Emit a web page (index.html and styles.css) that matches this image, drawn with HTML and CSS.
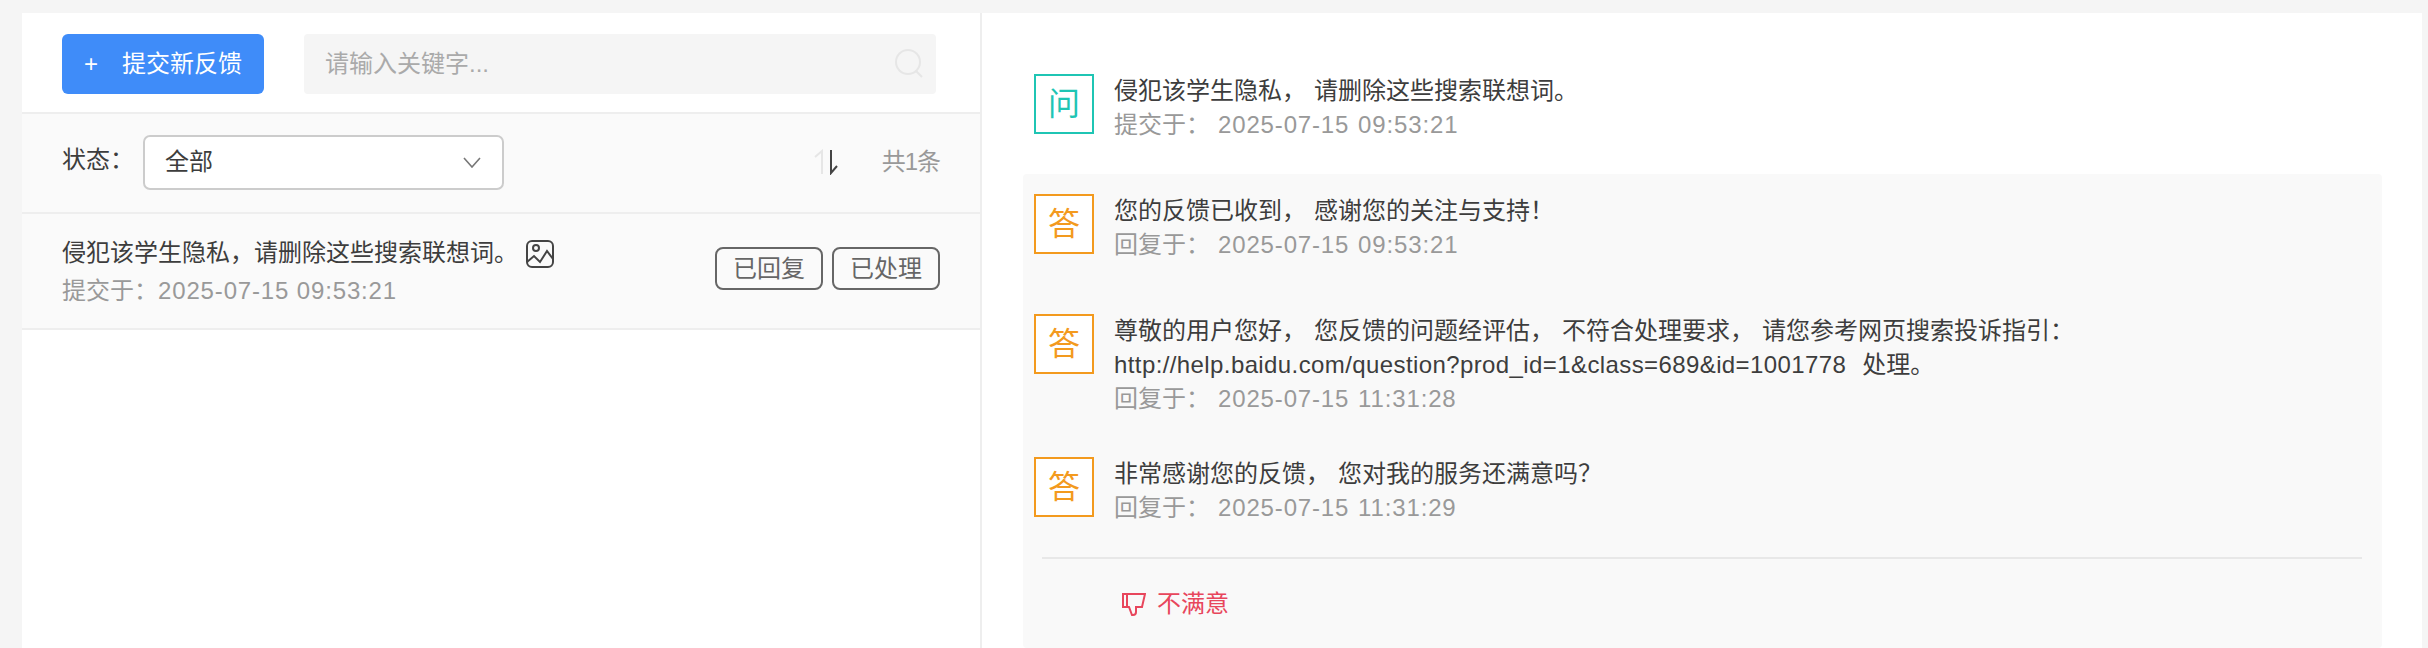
FILE: index.html
```html
<!DOCTYPE html>
<html lang="zh-CN">
<head>
    <meta charset="UTF-8">
    <title>反馈中心</title>
    <link rel="stylesheet" href="styles.css">
</head>
<body>
    <div class="panel">
        <div class="list-pane">
            <div class="toolbar">
                <button class="btn-new"><span class="plus">+</span>提交新反馈</button>
                <div class="search">
                    <span class="search-text">请输入关键字...</span>
                    <svg class="search-icon" viewBox="0 0 30 30" fill="none" stroke="#e6e6e6" stroke-width="2">
                        <circle cx="14" cy="13" r="12"/>
                        <path d="M22 22l6 6"/>
                    </svg>
                </div>
            </div>
            <div class="filter">
                <span class="filter-label">状态：</span>
                <div class="select">
                    <span>全部</span>
                    <svg class="chevron" viewBox="0 0 18 11" fill="none" stroke="#777" stroke-width="1.6">
                        <path d="M1 1l8 9 8-9"/>
                    </svg>
                </div>
                <svg class="sort-icon" viewBox="0 0 26 26" fill="none" stroke-width="2">
                    <path stroke="#e6e6e6" d="M9 25V2L2 8"/>
                    <path stroke="#444" d="M18 1v23l6-7"/>
                </svg>
                <span class="total">共1条</span>
            </div>
            <div class="item">
                <div class="item-main">
                    <div class="item-title">
                        侵犯该学生隐私，请删除这些搜索联想词。
                        <svg class="pic-icon" viewBox="0 0 28 28" fill="none" stroke="#444" stroke-width="2">
                            <rect x="1" y="1" width="26" height="26" rx="5"/>
                            <circle cx="10" cy="8" r="3"/>
                            <path d="M1 22l7-6 6 6 7-11 6 8"/>
                        </svg>
                    </div>
                    <div class="item-date">提交于：<span class="stamp">2025-07-15 09:53:21</span></div>
                </div>
                <span class="tag">已回复</span>
                <span class="tag">已处理</span>
            </div>
        </div>
        <div class="detail-pane">
            <div class="msg question">
                <div class="badge badge-q">问</div>
                <div class="msg-body">
                    <div>侵犯该学生隐私， 请删除这些搜索联想词。</div>
                    <div class="msg-date">提交于： <span class="stamp">2025-07-15 09:53:21</span></div>
                </div>
            </div>
            <div class="replies">
                <div class="msg">
                    <div class="badge badge-a">答</div>
                    <div class="msg-body">
                        <div>您的反馈已收到， 感谢您的关注与支持！</div>
                        <div class="msg-date">回复于： <span class="stamp">2025-07-15 09:53:21</span></div>
                    </div>
                </div>
                <div class="msg">
                    <div class="badge badge-a">答</div>
                    <div class="msg-body">
                        <div>尊敬的用户您好， 您反馈的问题经评估， 不符合处理要求， 请您参考网页搜索投诉指引：<br><span class="link-text">http://help.baidu.com/question?prod_id=1&amp;class=689&amp;id=1001778</span>&nbsp;&nbsp;处理。</div>
                        <div class="msg-date">回复于： <span class="stamp">2025-07-15 11:31:28</span></div>
                    </div>
                </div>
                <div class="msg">
                    <div class="badge badge-a">答</div>
                    <div class="msg-body">
                        <div>非常感谢您的反馈， 您对我的服务还满意吗？</div>
                        <div class="msg-date">回复于： <span class="stamp">2025-07-15 11:31:29</span></div>
                    </div>
                </div>
                <div class="rating">
                    <svg class="thumb-icon" viewBox="0 0 24 23" fill="none" stroke="#e8465c" stroke-width="2">
                        <path d="M5 1h18l-3 13h-6v5c0 2-1 3-3 3h-1l-3-8H5z"/>
                        <path d="M1 1h4v13H1z"/>
                    </svg>
                    不满意
                </div>
            </div>
        </div>
    </div>
</body>
</html>
```

FILE: styles.css
```css
* {
    box-sizing: border-box;
}
html, body {
    height: 100%;
}
body {
    margin: 0;
    padding: 13px 6px 0 22px;
    overflow: hidden;
    background: #f5f5f5;
    color: #3d3d3d;
    font-family: "Liberation Sans", "Noto Sans CJK SC", sans-serif;
    font-size: 24px;
    line-height: 34px;
}
.panel {
    display: flex;
    height: 100%;
    background: #fff;
}
.stamp {
    letter-spacing: 0.85px;
}

/* left list */
.list-pane {
    width: 960px;
    flex: none;
    border-right: 2px solid #eee;
}
.toolbar {
    display: flex;
    gap: 40px;
    height: 101px;
    padding: 21px 44px 0 40px;
    border-bottom: 2px solid #eee;
}
.btn-new {
    display: flex;
    align-items: center;
    width: 202px;
    height: 60px;
    padding: 0 0 0 22px;
    border: none;
    border-radius: 6px;
    background: #3f8cf9;
    color: #fff;
    font: inherit;
}
.plus {
    width: 38px;
    text-align: left;
}
.search {
    flex: 1;
    display: flex;
    align-items: center;
    justify-content: space-between;
    height: 60px;
    padding: 0 12px 0 21px;
    border-radius: 4px;
    background: #f5f5f5;
    color: #aaa;
}
.search-icon {
    width: 30px;
    height: 30px;
}
.filter {
    display: flex;
    align-items: center;
    height: 100px;
    padding: 0 40px 2px;
    background: #fafafa;
    border-bottom: 2px solid #eee;
}
.filter-label {
    width: 81px;
    padding-bottom: 4px;
}
.select {
    display: flex;
    align-items: center;
    justify-content: space-between;
    width: 361px;
    height: 55px;
    padding: 0 21px 0 20px;
    border: 2px solid #ccc;
    border-radius: 7px;
    background: #fff;
}
.chevron {
    width: 18px;
    height: 11px;
}
.sort-icon {
    width: 26px;
    height: 26px;
    margin-left: auto;
}
.total {
    margin-left: 43px;
    color: #999;
    letter-spacing: -1px;
}
.item {
    display: flex;
    align-items: center;
    gap: 9px;
    height: 116px;
    padding: 0 40px;
    background: #fafafa;
    border-bottom: 2px solid #eee;
}
.item-main {
    flex: 1;
    padding-top: 2px;
}
.item-title {
    display: flex;
    align-items: center;
    gap: 8px;
}
.pic-icon {
    width: 28px;
    height: 28px;
    margin-top: 2px;
}
.item-date {
    margin-top: 4px;
    color: #999;
}
.tag {
    width: 108px;
    height: 43px;
    margin-bottom: 6px;
    border: 2px solid #666;
    border-radius: 8px;
    color: #666;
    line-height: 39px;
    text-align: center;
}

/* right detail */
.detail-pane {
    flex: 1;
    display: flex;
    flex-direction: column;
    padding: 61px 40px 0 41px;
    word-spacing: 1.33px;
}
.msg {
    display: flex;
    gap: 20px;
    min-height: 80px;
    margin-bottom: 40px;
}
.question {
    margin: 0 0 20px 11px;
}
.replies {
    flex: 1;
    min-height: 0;
    padding: 20px 20px 0 11px;
    border-radius: 4px;
    background: #f9f9f9;
}
.link-text {
    letter-spacing: 0.4px;
}
.replies .msg:nth-child(2) {
    margin-bottom: 41px;
}
.replies .msg:nth-child(3) {
    margin-bottom: 20px;
}
.badge {
    width: 60px;
    height: 60px;
    flex: none;
    border: 2px solid;
    background: #fff;
    font-size: 32px;
    line-height: 56px;
    text-align: center;
}
.badge-q {
    border-color: #1fc5b4;
    color: #1fc5b4;
}
.badge-a {
    border-color: #f39a1e;
    color: #f39a1e;
}
.msg-date {
    color: #999;
}
.rating {
    display: flex;
    align-items: center;
    gap: 11px;
    height: 92px;
    margin-left: 8px;
    padding-left: 80px;
    border-top: 2px solid #e8e8e8;
    color: #e8465c;
}
.thumb-icon {
    width: 24px;
    height: 23px;
}
```
